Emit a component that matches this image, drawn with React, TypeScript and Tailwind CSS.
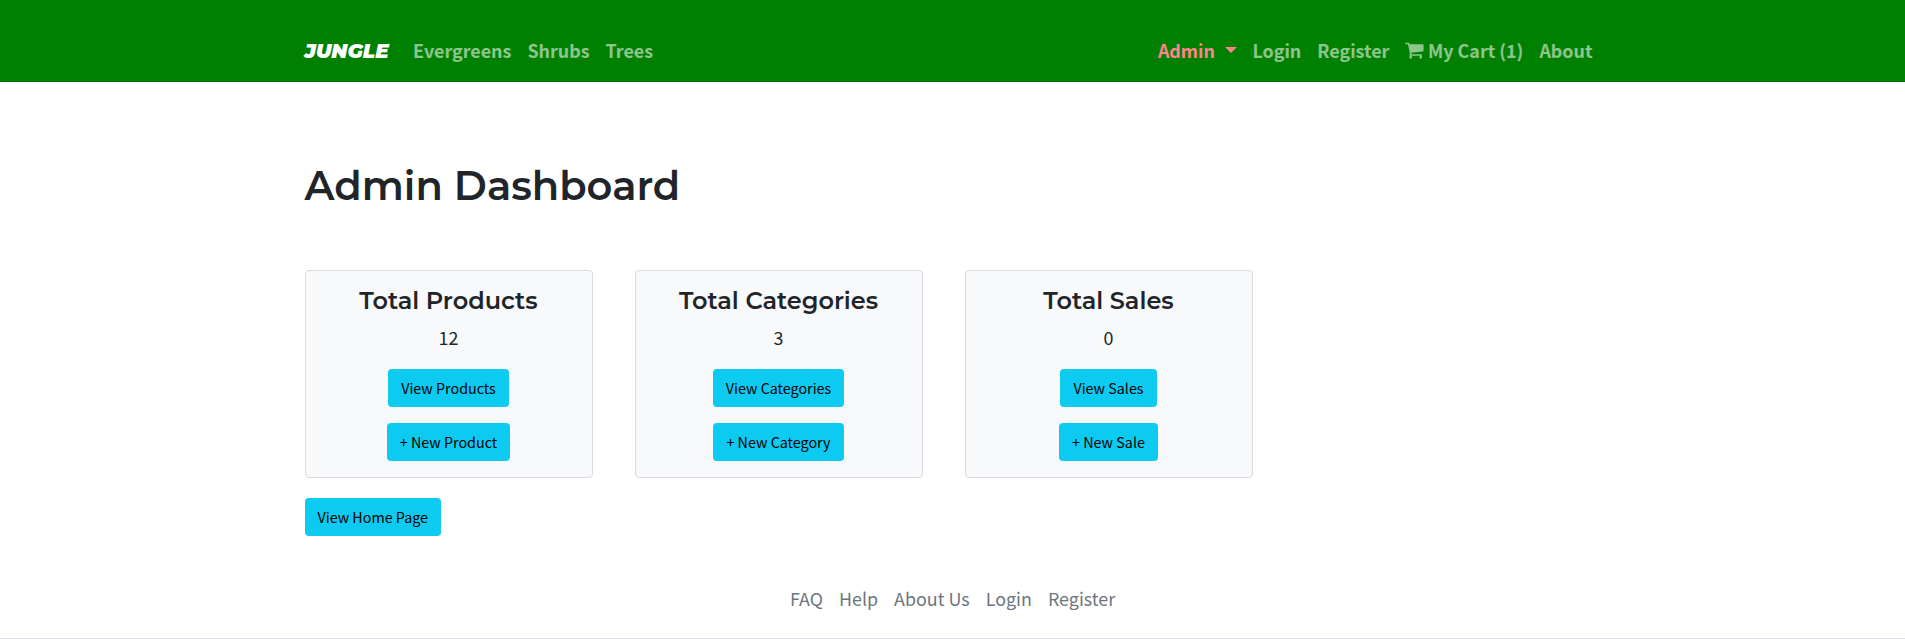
const body = "font-['Noto_Sans_CJK_SC','Noto_Sans',sans-serif]";
const display = "font-['Montserrat','Inter',sans-serif]";

const cards = [
  { title: "Total Products", count: 12, view: "View Products", add: "+ New Product" },
  { title: "Total Categories", count: 3, view: "View Categories", add: "+ New Category" },
  { title: "Total Sales", count: 0, view: "View Sales", add: "+ New Sale" },
];

function Button({ label }: { label: string }) {
  return (
    <button className="h-[38px] rounded bg-[#0dcaf0] px-[13px] text-[14.32px] leading-6 whitespace-nowrap text-black">
      {label}
    </button>
  );
}

function CartIcon() {
  return (
    <svg viewBox="0 0 1664 1792" className="mr-1 h-5 w-[18.57px]" fill="currentColor" aria-hidden="true">
      <path d="M640 1536q0 52-38 90t-90 38-90-38-38-90 38-90 90-38 90 38 38 90zm896 0q0 52-38 90t-90 38-90-38-38-90 38-90 90-38 90 38 38 90zm128-1088v512q0 24-16.5 42.5t-40.5 21.5l-1044 122q13 60 13 70 0 16-24 64h920q26 0 45 19t19 45-19 45-45 19h-1024q-26 0-45-19t-19-45q0-11 8-31.5t16-36 21.5-40 15.5-29.5l-177-823h-204q-26 0-45-19t-19-45 19-45 45-19h256q16 0 28.5 6.5t19.5 15.5 13 24.5 8 26 5.5 29.5 4.5 26h1201q26 0 45 19t19 45z" />
    </svg>
  );
}

export default function App() {
  return (
    <div className={`flex h-[639px] flex-col bg-white text-[17.9px] leading-[27px] text-[#212529] ${body}`}>
      <nav className="h-[82px] border-b border-[#007400] bg-[#008000]">
        <div className="mx-auto flex h-full w-[1296px] items-center pt-[19px] pr-2 font-bold text-white/55">
          <a className={`mr-[21.6px] w-[87px] pt-[3px] text-[20px] font-black whitespace-nowrap text-white italic ${display}`}>JUNGLE</a>
          <div className="flex gap-4">
            <a>Evergreens</a>
            <a>Shrubs</a>
            <a>Trees</a>
          </div>
          <div className="ml-auto flex gap-4">
            <a className="flex items-center text-[#ff858c]">
              Admin
              <span className="ml-[10px] border-x-[6px] border-t-[6px] border-x-transparent border-t-current" />
            </a>
            <a className="-ml-[0.6px]">Login</a>
            <a>Register</a>
            <a className="flex items-center">
              <CartIcon />
              My Cart (1)
            </a>
            <a>About</a>
          </div>
        </div>
      </nav>
      <main className="mx-auto w-[1296px] pt-[80px]">
        <h1 className={`text-[40px] leading-[48px] font-semibold ${display}`}>Admin Dashboard</h1>
        <section className="mt-[60px] flex gap-[42px]">
          {cards.map((card) => (
            <article
              key={card.title}
              className="flex h-[208px] w-[288px] flex-col items-center rounded border border-[#d8dbdf] bg-[#f8f9fa] pt-[15px]"
            >
              <h2 className={`text-[24px] leading-[29px] font-semibold ${display}`}>{card.title}</h2>
              <p className="mt-2 mb-[17px] leading-[29px]">{card.count}</p>
              <div className="flex flex-col items-center gap-4">
                <Button label={card.view} />
                <Button label={card.add} />
              </div>
            </article>
          ))}
        </section>
        <div className="mt-5">
          <Button label="View Home Page" />
        </div>
      </main>
      <footer className="mt-auto border-b border-[#dee2e6] pb-[26px]">
        <div className="flex justify-center gap-4 text-[#6c757d]">
          <a>FAQ</a>
          <a>Help</a>
          <a>About Us</a>
          <a>Login</a>
          <a>Register</a>
        </div>
      </footer>
    </div>
  );
}
